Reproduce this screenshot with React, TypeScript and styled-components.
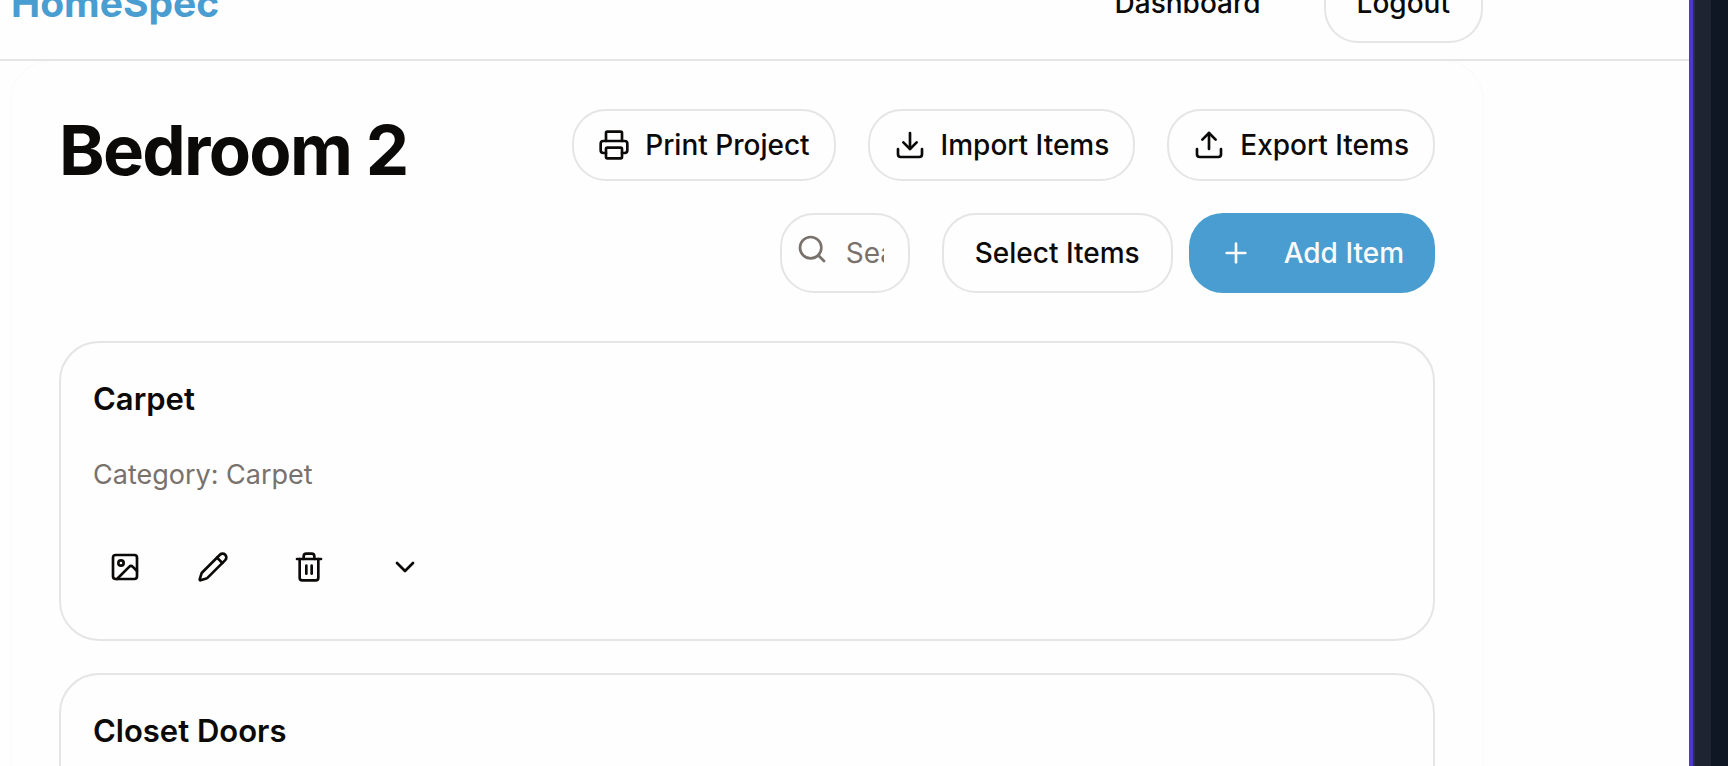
import React from "react";
import styled, { createGlobalStyle, css } from "styled-components";
import {
  ChevronDown,
  Download,
  Image,
  Pencil,
  Plus,
  Printer,
  Search,
  Trash2,
  Upload,
} from "lucide-react";

const GlobalStyle = createGlobalStyle`
  *, *::before, *::after { box-sizing: border-box; }
  body {
    margin: 0;
    font-family: Inter, "Liberation Sans", sans-serif;
    font-size: 28px;
    line-height: 40px;
    color: #0c0a09;
    background: #0f1624;
    -webkit-font-smoothing: antialiased;
  }
  h1, h2, p { margin: 0; }
`;

const Backdrop = styled.div`
  height: 100vh;
  overflow: hidden;
  padding-right: 17px;
  background: #0f1624;
`;

const WindowFrame = styled.div`
  height: 100%;
  padding-right: 18px;
  background: #1e2431;
`;

const Viewport = styled.div`
  height: 100%;
  overflow: hidden;
  background: #fefefe;
  border-right: 4px solid #4d38c8;
  box-shadow: 2px 0 0 #2b3045;
`;

const Header = styled.header`
  position: relative;
  z-index: 1;
  height: 61px;
  border-bottom: 2px solid #e5e5e5;
`;

const HeaderInner = styled.div`
  display: flex;
  align-items: flex-end;
  justify-content: space-between;
  height: 100%;
  max-width: 1472px;
  margin-left: 11px;
  padding-bottom: 16px;
`;

const Brand = styled.a`
  font-size: 39px;
  line-height: 80px;
  font-weight: 700;
  color: #4a9dd0;
  text-decoration: none;
`;

const Nav = styled.nav`
  display: flex;
  align-items: center;
  gap: 32px;
`;

const buttonBase = css`
  display: inline-flex;
  align-items: center;
  justify-content: center;
  flex: none;
  gap: 15px;
  height: 80px;
  padding: 0 31px;
  border: 0;
  border-radius: 34px;
  background: transparent;
  color: inherit;
  font: inherit;
  font-weight: 500;
  white-space: nowrap;
  text-decoration: none;
  cursor: pointer;

  svg { flex: none; }
`;

const NavLink = styled.a`
  ${buttonBase}
`;

const OutlineButton = styled.button<{ $compact?: boolean }>`
  ${buttonBase}
  border: 2px solid #e5e5e5;
  ${({ $compact }) => $compact && css`
    height: 72px;
    padding: 0 24px;
  `}
`;

const PrimaryButton = styled.button`
  ${buttonBase}
  gap: 32px;
  background: #4a9dd0;
  color: #fafaf9;
`;

const IconButton = styled.button<{ $narrow?: boolean }>`
  ${buttonBase}
  width: ${({ $narrow }) => ($narrow ? 64 : 80)}px;
  padding: 0;
`;

const Panel = styled.main`
  max-width: 1472px;
  margin-left: 11px;
  padding: 48px;
  border-radius: 40px;
  box-shadow: 0 0 0 1px #fafafa;
`;

const PanelHeader = styled.div`
  display: flex;
  align-items: flex-start;
  justify-content: space-between;
  gap: 32px;
`;

const Title = styled.h1`
  font-size: 69px;
  line-height: 82px;
  font-weight: 700;
  letter-spacing: -0.025em;
  white-space: nowrap;
`;

const Toolbar = styled.div`
  display: flex;
  flex-direction: column;
  gap: 32px;
`;

const ToolbarRow = styled.div`
  display: flex;
  justify-content: flex-end;
  gap: 32px;
`;

const ButtonPair = styled.div`
  display: flex;
  gap: 16px;
`;

const SearchField = styled.label`
  position: relative;
  width: 130px;

  svg {
    position: absolute;
    left: 16px;
    top: 20px;
    color: #78716c;
  }
`;

const SearchInput = styled.input`
  display: block;
  width: 100%;
  height: 80px;
  padding: 0 24px 0 64px;
  border: 2px solid #e5e5e5;
  border-radius: 34px;
  background: transparent;
  color: inherit;
  font: inherit;

  &::placeholder {
    color: #78716c;
    opacity: 1;
  }
`;

const ItemList = styled.div`
  display: flex;
  flex-direction: column;
  gap: 32px;
  margin-top: 48px;
`;

const ItemCard = styled.article`
  display: flex;
  flex-direction: column;
  gap: 32px;
  padding: 32px;
  border: 2px solid #e5e5e5;
  border-radius: 40px;
`;

const ItemName = styled.h2`
  font-size: 31px;
  line-height: 48px;
  font-weight: 600;
`;

const ItemCategory = styled.p`
  font-size: 27px;
  color: #78716c;
`;

const ItemActions = styled.div`
  display: flex;
  gap: 16px;
`;

const items = [
  { name: "Carpet", category: "Carpet" },
  { name: "Closet Doors", category: "Doors" },
];

export default function App() {
  return (
    <>
      <GlobalStyle />
      <Backdrop>
        <WindowFrame>
          <Viewport>
            <Header>
              <HeaderInner>
                <Brand href="#home">HomeSpec</Brand>
                <Nav>
                  <NavLink href="#dashboard">Dashboard</NavLink>
                  <OutlineButton type="button">Logout</OutlineButton>
                </Nav>
              </HeaderInner>
            </Header>
            <Panel>
              <PanelHeader>
                <Title>Bedroom 2</Title>
                <Toolbar>
                  <ToolbarRow>
                    <OutlineButton type="button" $compact>
                      <Printer size={32} />
                      Print Project
                    </OutlineButton>
                    <OutlineButton type="button" $compact>
                      <Download size={32} />
                      Import Items
                    </OutlineButton>
                    <OutlineButton type="button" $compact>
                      <Upload size={32} />
                      Export Items
                    </OutlineButton>
                  </ToolbarRow>
                  <ToolbarRow>
                    <SearchField>
                      <Search size={32} />
                      <SearchInput
                        type="text"
                        aria-label="Search items"
                        placeholder="Search items..."
                      />
                    </SearchField>
                    <ButtonPair>
                      <OutlineButton type="button">Select Items</OutlineButton>
                      <PrimaryButton type="button">
                        <Plus size={32} />
                        Add Item
                      </PrimaryButton>
                    </ButtonPair>
                  </ToolbarRow>
                </Toolbar>
              </PanelHeader>
              <ItemList>
                {items.map(({ name, category }) => (
                  <ItemCard key={name}>
                    <ItemName>{name}</ItemName>
                    <ItemCategory>Category: {category}</ItemCategory>
                    <ItemActions>
                      <IconButton type="button" aria-label="View image" $narrow>
                        <Image size={32} />
                      </IconButton>
                      <IconButton type="button" aria-label="Edit item">
                        <Pencil size={32} />
                      </IconButton>
                      <IconButton type="button" aria-label="Delete item">
                        <Trash2 size={32} />
                      </IconButton>
                      <IconButton type="button" aria-label="Show details">
                        <ChevronDown size={32} />
                      </IconButton>
                    </ItemActions>
                  </ItemCard>
                ))}
              </ItemList>
            </Panel>
          </Viewport>
        </WindowFrame>
      </Backdrop>
    </>
  );
}
